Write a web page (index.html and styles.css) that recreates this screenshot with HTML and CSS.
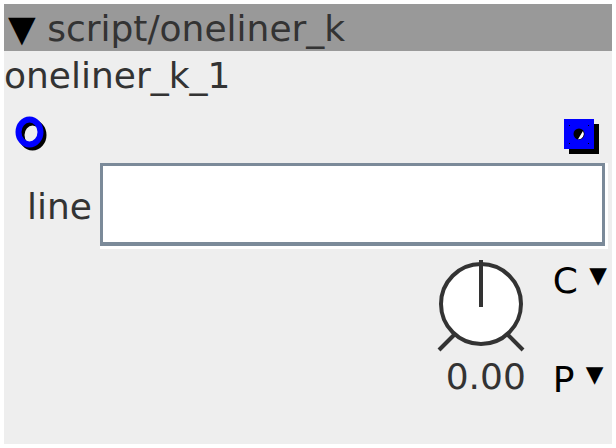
FILE: index.html
```html
<!DOCTYPE html>
<html>
<head>
<meta charset="utf-8">
<link rel="stylesheet" href="styles.css">
</head>
<body>
<div class="panel">
  <div class="header"><span class="tri">▼</span> script/oneliner_k</div>
  <div class="name">oneliner_k_1</div>
  <div class="ports">
    <svg class="port-in" width="34" height="36" viewBox="0 0 34 36">
      <ellipse cx="17.5" cy="20" rx="11" ry="12.5" fill="none" stroke="#000" stroke-width="6"/>
      <ellipse cx="14.5" cy="17" rx="11" ry="12.5" fill="none" stroke="#0000ff" stroke-width="6"/>
    </svg>
    <svg class="port-out" width="36" height="36" viewBox="0 0 36 36">
      <rect x="5" y="5" width="30" height="30" fill="#000"/>
      <rect x="0" y="0" width="30" height="30" fill="#0000ff"/>
      <rect x="5" y="6" width="1" height="1" fill="#000"/>
      <rect x="24" y="6" width="1" height="1" fill="#000"/>
      <rect x="5" y="24" width="1" height="1" fill="#000"/>
      <rect x="24" y="24" width="1" height="1" fill="#000"/>
      <circle cx="15" cy="15" r="5.5" fill="#000"/>
      <path d="M19 12 A5.5 5.5 0 0 1 14 20.3 Z" fill="#fff"/>
    </svg>
  </div>
  <div class="field">
    <span class="label">line</span>
    <div class="box-outer"><div class="box"></div></div>
  </div>
  <div class="controls">
    <div class="knob-col">
      <svg class="knob" width="96" height="96" viewBox="0 0 96 96">
        <line x1="6" y1="91" x2="22" y2="75" stroke="#333" stroke-width="4"/>
        <line x1="74" y1="75" x2="90" y2="91" stroke="#333" stroke-width="4"/>
        <circle cx="48" cy="45" r="40" fill="#fff" stroke="#333" stroke-width="4"/>
        <line x1="48" y1="1" x2="48" y2="48" stroke="#333" stroke-width="4"/>
      </svg>
      <div class="value">0.00</div>
    </div>
    <div class="sel-col">
      <div class="sel">C <span class="small-tri">▼</span></div>
      <div class="sel">P <span class="small-tri">▼</span></div>
    </div>
  </div>
</div>
</body>
</html>
```
FILE: styles.css
```css
html, body {
  margin: 0;
  padding: 0;
  background: #ffffff;
}
body {
  font-family: "DejaVu Sans", sans-serif;
  color: #333333;
}
.panel {
  margin: 4px;
  width: 608px;
  height: 440px;
  background: #eeeeee;
  display: flex;
  flex-direction: column;
}
.header {
  height: 47px;
  background: #999999;
  font-size: 36px;
  line-height: 50px;
  padding-left: 4px;
  white-space: nowrap;
  overflow: hidden;
}
.tri {
  color: #000;
}
.name {
  font-size: 36px;
  line-height: 50px;
  height: 48px;
  padding-left: 0;
  white-space: nowrap;
}
.ports {
  height: 63px;
  display: flex;
  justify-content: space-between;
  align-items: center;
  padding: 4px 12px 0 11px;
  box-sizing: border-box;
}
.port-out {
  margin-top: 8px;
}
.field {
  display: flex;
  align-items: center;
  height: 88px;
}
.label {
  font-size: 36px;
  width: 88px;
  text-align: right;
  padding-right: 8px;
}
.box-outer {
  margin-left: 0;
  border-style: solid;
  border-width: 0 3px 3px 0;
  border-color: transparent #ffffff #ffffff transparent;
}
.box {
  width: 499px;
  height: 76px;
  background: #ffffff;
  border: 3px solid #7b8a99;
  border-bottom-width: 4px;
}
.controls {
  display: flex;
  justify-content: flex-end;
  padding-top: 9px;
  padding-right: 5px;
}
.knob-col {
  display: flex;
  flex-direction: column;
  align-items: flex-start;
  width: 106px;
}
.knob {
  display: block;
}
.value {
  font-size: 36px;
  line-height: 38px;
  margin-top: 3px;
  margin-left: 13px;
}
.sel-col {
  display: flex;
  flex-direction: column;
  gap: 55px;
  margin-left: 14px;
  margin-top: -3px;
}
.sel {
  font-size: 36px;
  line-height: 38px;
  color: #000;
  white-space: nowrap;
}
.small-tri {
  font-size: 23px;
  vertical-align: 10px;
}
```
